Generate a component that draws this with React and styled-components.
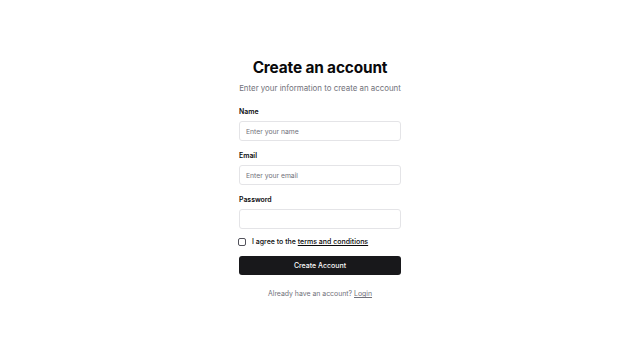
import React from "react";
import styled, { createGlobalStyle } from "styled-components";

const Global = createGlobalStyle`
  html, body { margin: 0; padding: 0; background: #ffffff; }
  body { font-family: Inter, "Noto Sans", sans-serif; color: #09090b; }
  * { box-sizing: border-box; }
`;

const Page = styled.div`
  width: 640px;
  height: 357px;
  display: flex;
  align-items: flex-start;
  justify-content: center;
  padding-top: 58px;
`;

const Card = styled.div`
  width: 162px;
  display: flex;
  flex-direction: column;
`;

const Header = styled.div`
  display: flex;
  flex-direction: column;
  align-items: center;
  gap: 4px;
  margin-bottom: 13px;
`;

const Title = styled.h1`
  margin: 0;
  font-size: 15.4px;
  line-height: 20px;
  font-weight: 700;
  letter-spacing: -0.15px;
  color: #09090b;
`;

const Subtitle = styled.p`
  margin: 0;
  font-size: 7.9px;
  line-height: 12px;
  color: #71717a;
  white-space: nowrap;
`;

const Field = styled.div`
  display: flex;
  flex-direction: column;
  gap: 4px;
  margin-bottom: 10px;
`;

const Label = styled.label`
  font-size: 6.9px;
  line-height: 10px;
  font-weight: 600;
  color: #09090b;
`;

const Input = styled.input`
  height: 20px;
  width: 100%;
  border: 1px solid #e4e4e7;
  border-radius: 3px;
  padding: 0 6px;
  font-family: Inter, sans-serif;
  font-size: 6.8px;
  color: #09090b;
  background: #fff;
  outline: none;
  &::placeholder { color: #71717a; }
`;

const CheckRow = styled.div`
  display: flex;
  align-items: center;
  gap: 6px;
  margin-top: -2px;
  margin-bottom: 9px;
`;

const Box = styled.span`
  width: 8px;
  height: 8px;
  margin-left: -1px;
  border: 1px solid #52525b;
  border-radius: 2px;
  flex: none;
`;

const CheckText = styled.span`
  font-size: 7px;
  line-height: 10px;
  font-weight: 500;
  color: #09090b;
`;

const Link = styled.a`
  color: inherit;
  text-decoration: underline;
`;

const Button = styled.button`
  height: 19px;
  width: 100%;
  border: none;
  border-radius: 3px;
  background: #18181b;
  color: #fafafa;
  font-family: Inter, sans-serif;
  font-size: 7px;
  font-weight: 500;
`;

const Footer = styled.p`
  margin: 14px 0 0;
  text-align: center;
  font-size: 6.9px;
  line-height: 10px;
  color: #71717a;
`;

export default function App() {
  return (
    <>
      <Global />
      <Page>
        <Card>
          <Header>
            <Title>Create an account</Title>
            <Subtitle>Enter your information to create an account</Subtitle>
          </Header>
          <Field>
            <Label>Name</Label>
            <Input placeholder="Enter your name" />
          </Field>
          <Field>
            <Label>Email</Label>
            <Input placeholder="Enter your email" />
          </Field>
          <Field>
            <Label>Password</Label>
            <Input type="password" />
          </Field>
          <CheckRow>
            <Box />
            <CheckText>
              I agree to the <Link>terms and conditions</Link>
            </CheckText>
          </CheckRow>
          <Button>Create Account</Button>
          <Footer>
            Already have an account? <Link>Login</Link>
          </Footer>
        </Card>
      </Page>
    </>
  );
}
